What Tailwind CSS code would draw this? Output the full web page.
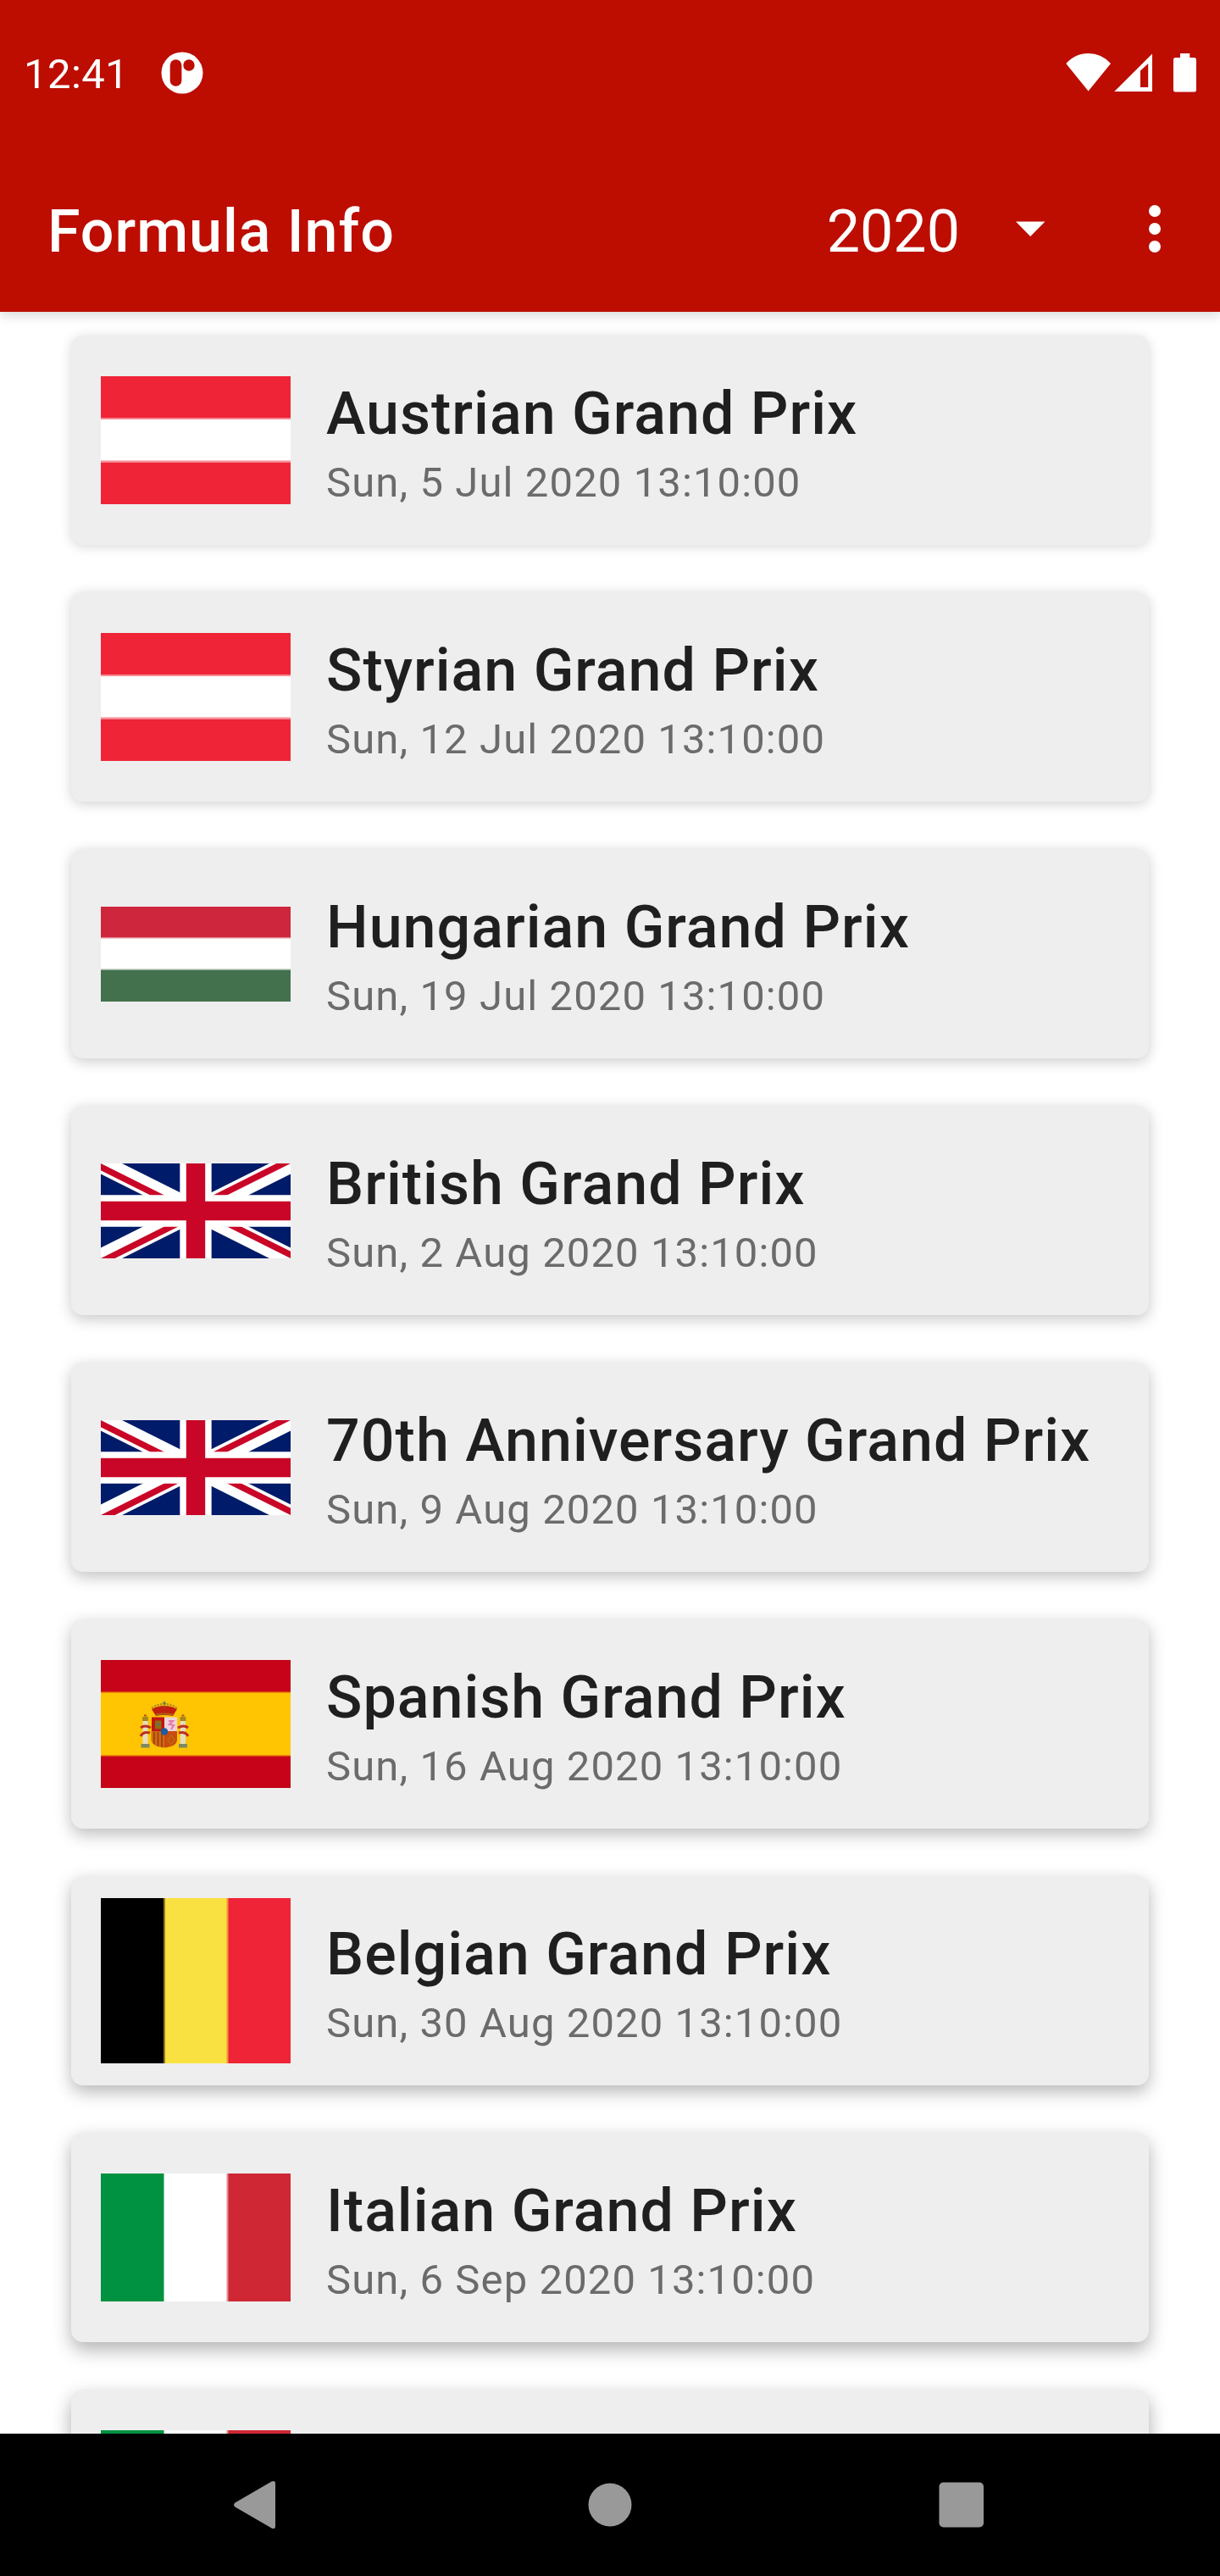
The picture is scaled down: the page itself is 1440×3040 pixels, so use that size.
<!DOCTYPE html>
<html lang="en">
<head>
<meta charset="utf-8">
<title>Formula Info</title>
<script src="https://cdn.jsdelivr.net/npm/@tailwindcss/browser@4"></script>
</head>
<body class="bg-white font-[Roboto,sans-serif]">
<svg class="hidden">
  <symbol id="at" viewBox="0 0 224 151"><rect width="224" height="151" fill="#ef2437"/><rect y="49" width="224" height="53" fill="#f58b95"/><rect y="51" width="224" height="48.500" fill="#fff"/></symbol>
  <symbol id="hu" viewBox="0 0 224 112"><rect width="224" height="112" fill="#ce263c"/><rect y="36" width="224" height="2" fill="#e28a97"/><rect y="37.500" width="224" height="37" fill="#fff"/><rect y="73.500" width="224" height="2" fill="#9db5a2"/><rect y="75" width="224" height="37" fill="#43714d"/></symbol>
  <symbol id="gb" viewBox="0 0 60 30">
    <path d="M0 0v30h60V0z" fill="#001b69"/>
    <path d="M-6-3L66 33M66-3L-6 33" stroke="#fff" stroke-width="6"/>
    <path d="M0 0L30 15V17.236L0 2.236zM60 0L30 15V12.764L55.530 0zM60 30L30 15V12.764L60 27.764zM0 30L30 15V17.236L4.470 30z" fill="#c90627"/>
    <path d="M30 0v30M0 15h60" stroke="#fff" stroke-width="10"/><path d="M30 0v30M0 15h60" stroke="#c90627" stroke-width="6"/>
  </symbol>
  <symbol id="es" viewBox="0 0 224 151">
    <rect width="224" height="151" fill="#c60318"/><rect y="37" width="224" height="77" fill="#dc4a10"/><rect y="38.500" width="224" height="74" fill="#ffc502"/>
    <g>
      <rect x="49.500" y="71" width="6" height="28" fill="#e3dcc4"/><rect x="94" y="71" width="6" height="28" fill="#e3dcc4"/>
      <path d="M49 67h7v5h-7zM93.500 67h7v5h-7z" fill="#a8891c"/><path d="M51 64.500h3v2h-3zM95.500 64.500h3v2h-3z" fill="#b5501c"/><path d="M47.500 99h10v4.500h-10zM92 99h10v4.500H92z" fill="#7d8a62"/>
      <path d="M47 80q5-4 12 0M47 90q3-6 11-4M103 80q-5-4-12 0M103 90q-3-6-11-4" stroke="#bd3020" stroke-width="3" fill="none"/>
      <path d="M60 67.500h15v17H60z" fill="#c2150f"/><path d="M75 67.500h15v17H75z" fill="#eed3da"/>
      <path d="M59.500 84h15.500v19.500Q59.500 102 59.500 94z" fill="#c8700e"/><path d="M75 84h15v10q0 8-15 9.500z" fill="#cc4a0f"/>
      <path d="M64 71.500h7.500v10H64z" fill="#8f6c14"/><path d="M66 76h4" stroke="#4a7a6a" stroke-width="2"/><path d="M63 85v14M67.500 85v17M72 85v18" stroke="#a8301a" stroke-width="1.500"/>
      <path d="M79 94l4-5 4 5-4 6z" stroke="#b0700f" stroke-width="1.500" fill="none"/>
      <path d="M80 72h5l-4 4 5 1-3 5" stroke="#e679ad" stroke-width="2.200" fill="none"/>
      <circle cx="75" cy="84.500" r="4.200" fill="#1d5c9c"/>
      <path d="M65 66L60 58q7-4 15-4t15 4l-5 8q-10-2-20 0z" fill="#c2200f"/><path d="M60 57q6-5 15-5t15 5" stroke="#b08b20" stroke-width="2" fill="none" stroke-dasharray="2.500 1.200"/><path d="M65 64.500q10-2 20 0" stroke="#a8601a" stroke-width="2" fill="none"/><path d="M75 48.500v7M73 51h4" stroke="#71804f" stroke-width="1.500"/>
    </g>
  </symbol>
  <symbol id="be" viewBox="0 0 224 195"><rect width="75" height="195"/><rect x="74" width="75" height="195" fill="#8a7a20"/><rect x="76" width="75" height="195" fill="#f9e141"/><rect x="148.500" width="3" height="195" fill="#f5953d"/><rect x="150.500" width="73.500" height="195" fill="#ef2437"/></symbol>
  <symbol id="it" viewBox="0 0 224 151"><rect width="75" height="151" fill="#009141"/><rect x="74.500" width="75" height="151" fill="#fff"/><rect x="148.500" width="3" height="151" fill="#e48e95"/><rect x="150.500" width="73.500" height="151" fill="#cf2734"/></symbol>
</svg>
<div class="flex h-[3040px] w-[1440px] flex-col overflow-hidden">
  <header class="relative z-10 flex h-[368px] shrink-0 flex-col bg-[#bc0d00] text-white shadow-[0_3px_14px_rgba(0,0,0,0.18)]">
    <div class="flex h-[172px] items-center px-7">
      <span class="pt-1 text-[49px] leading-[58px] tracking-[0.4px]">12:41</span>
      <svg class="ml-[38px]" width="50" height="50" viewBox="0 0 50 50"><circle cx="25" cy="25" r="24.500" fill="#fff"/><rect x="10.700" y="9.300" width="13.700" height="31.400" rx="6.800" fill="#bc0d00"/><circle cx="33" cy="16" r="6.700" fill="#bc0d00"/></svg>
      <svg class="ml-auto" width="154" height="46" viewBox="1258 63 154 46" fill="#fff"><path d="M1258.300 75Q1269 63 1284.600 63T1311 75L1284.600 107.400z"/><path fill-rule="evenodd" d="M1360 63.500V108H1315.300zM1346 83.500V103H1355.200V75z"/><path d="M1393 63h11.300v5H1409.500a2.500 2.500 0 0 1 2.500 2.500V106a2.500 2.500 0 0 1-2.500 2.500H1387.500a2.500 2.500 0 0 1-2.500-2.500V70.500a2.500 2.500 0 0 1 2.500-2.500H1393z"/></svg>
    </div>
    <div class="flex h-[196px] items-center pl-14 pr-[70px]">
      <h1 class="pt-1.5 text-[70px] font-medium leading-[82px] tracking-[0.95px]">Formula Info</h1>
      <span class="ml-auto pt-1.5 text-[70px] leading-[82px]">2020</span>
      <svg class="ml-[66px]" width="35" height="18" viewBox="0 0 35 18" fill="#fff"><path d="M0 .5h34.500L17.200 18z"/></svg>
      <svg class="ml-[122px]" width="14" height="56" viewBox="0 0 14 56" fill="#fff"><circle cx="7" cy="7" r="7"/><circle cx="7" cy="28" r="7"/><circle cx="7" cy="49" r="7"/></svg>
    </div>
  </header>
  <main id="races" class="flex min-h-0 flex-1 flex-col gap-14 overflow-hidden px-[84px] pt-7"></main>
  <nav class="relative z-10 flex h-[168px] shrink-0 items-center bg-black">
    <svg width="1440" height="168" viewBox="0 0 1440 168" fill="#999"><path d="M277.500 81.500Q274.500 84 277.500 86.500L320.500 111.500Q325 113.500 325 109V59Q325 54.500 320.500 56.500z"/><circle cx="720" cy="84" r="25.500"/><rect x="1108.500" y="57.500" width="52.500" height="53" rx="5"/></svg>
  </nav>
</div>
<template id="race">
  <article class="flex h-[247px] shrink-0 items-center rounded-[14px] bg-[#eee] pl-[35px]">
    <svg class="w-56 shrink-0"><use/></svg>
    <div class="ml-[42px] pt-[19px]">
      <h2 class="whitespace-nowrap text-[70px] font-medium leading-[82px] tracking-[1px] text-[#1f1f1f]"></h2>
      <p class="whitespace-nowrap text-[49px] leading-[82px] tracking-[1.1px] text-[#6b6b6b]"></p>
    </div>
  </article>
</template>
<script>
const races = [
  ["Austrian Grand Prix", "Sun, 5 Jul 2020 13:10:00", "at", 151],
  ["Styrian Grand Prix", "Sun, 12 Jul 2020 13:10:00", "at", 151],
  ["Hungarian Grand Prix", "Sun, 19 Jul 2020 13:10:00", "hu", 112],
  ["British Grand Prix", "Sun, 2 Aug 2020 13:10:00", "gb", 112],
  ["70th Anniversary Grand Prix", "Sun, 9 Aug 2020 13:10:00", "gb", 112],
  ["Spanish Grand Prix", "Sun, 16 Aug 2020 13:10:00", "es", 151],
  ["Belgian Grand Prix", "Sun, 30 Aug 2020 13:10:00", "be", 195],
  ["Italian Grand Prix", "Sun, 6 Sep 2020 13:10:00", "it", 151],
  ["", "", "it", 151]
];
const list = document.getElementById("races"), tpl = document.getElementById("race");
races.forEach(([name, date, flag, h], i) => {
  const row = tpl.content.cloneNode(true);
  row.querySelector("h2").textContent = name;
  row.querySelector("p").textContent = date;
  row.querySelector("use").setAttribute("href", "#" + flag);
  row.querySelector("svg").setAttribute("height", h);
  // elevation shadow deepens further down the list
  row.querySelector("article").style.boxShadow = `0 ${2 + i * 0.9}px ${14 + i}px rgba(0,0,0,${0.16 + i * 0.02})`;
  list.appendChild(row);
});
</script>
</body>
</html>
